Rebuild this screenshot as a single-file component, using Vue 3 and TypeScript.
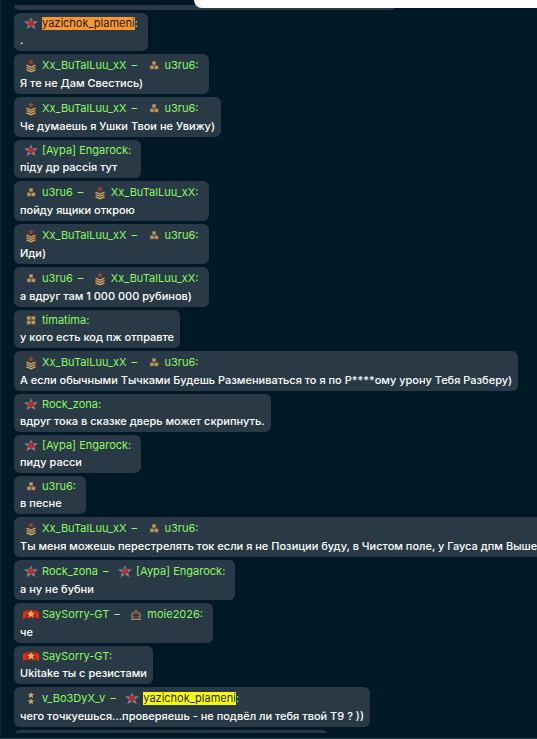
<script setup lang="ts">
type Rank = 'star' | 'chevrons' | 'three' | 'four' | 'banner' | 'crate' | 'twoStars'
type Mark = 'active' | 'found'

interface Player {
  rank: Rank
  name: string
  mark?: Mark
}

interface Message {
  from: Player
  to?: Player
  text: string
}

const yazichok: Player = { rank: 'star', name: 'yazichok_plameni' }
const brutal: Player = { rank: 'chevrons', name: 'Xx_BuTalLuu_xX' }
const u3: Player = { rank: 'three', name: 'u3ru6' }
const engarock: Player = { rank: 'star', name: '[Аура] Engarock' }
const rock: Player = { rank: 'star', name: 'Rock_zona' }
const sorry: Player = { rank: 'banner', name: 'SaySorry-GT' }

const messages: Message[] = [
  { from: { ...yazichok, mark: 'active' }, text: '.' },
  { from: brutal, to: u3, text: 'Я те не Дам Свестись)' },
  { from: brutal, to: u3, text: 'Че думаешь я Ушки Твои не Увижу)' },
  { from: engarock, text: 'піду др рассія тут' },
  { from: u3, to: brutal, text: 'пойду ящики открою' },
  { from: brutal, to: u3, text: 'Иди)' },
  { from: u3, to: brutal, text: 'а вдруг там 1 000 000 рубинов)' },
  { from: { rank: 'four', name: 'timatima' }, text: 'у кого есть код пж отправте' },
  { from: brutal, to: u3, text: 'А если обычными Тычками Будешь Размениваться то я по Р****ому урону Тебя Разберу)' },
  { from: rock, text: 'вдруг тока в сказке дверь может скрипнуть.' },
  { from: engarock, text: 'пиду расси' },
  { from: u3, text: 'в песне' },
  { from: brutal, to: u3, text: 'Ты меня можешь перестрелять ток если я не Позиции буду, в Чистом поле, у Гауса дпм Выше' },
  { from: rock, to: engarock, text: 'а ну не бубни' },
  { from: sorry, to: { rank: 'crate', name: 'moie2026' }, text: 'че' },
  { from: sorry, text: 'Ukitake ты с резистами' },
  {
    from: { rank: 'twoStars', name: 'v_Bo3DyX_v' },
    to: { ...yazichok, mark: 'found' },
    text: 'чего точкуешься...проверяешь - не подвёл ли тебя твой Т9 ? ))',
  },
]

const players = (m: Message): Player[] => (m.to ? [m.from, m.to] : [m.from])
</script>

<template>
  <main class="screen">
    <svg class="defs" aria-hidden="true">
      <symbol id="star" viewBox="0 0 22 16">
        <path d="M11 2.4l1.7 3.8 5.3.2-4.1 3 1.6 4.5-4.5-2.4-4.500 2.400 1.600-4.500-4.100-3 5.300-.2z" fill="#8f969b" stroke="#4d5862" stroke-width=".5" />
        <path d="M8.300 7.200L11 5.800l2.700 1.400-.5 3-2.200 1-2.200-1z" fill="#d3222c" stroke="#8e1f26" stroke-width=".7" />
      </symbol>
      <symbol id="chevrons" viewBox="0 0 22 16">
        <path d="M6.5 7.5L11 9.300l4.500-1.800V13L11 15.500 6.500 13z" fill="#5b4428" />
        <path d="M6.5 8.200l4.500 1.900 4.500-1.900M6.500 10.500l4.500 1.900 4.500-1.900M6.500 12.800l4.500 1.900 4.500-1.900" fill="none" stroke="#c8a56d" stroke-width="1.3" />
        <path d="M11 2l.8 1.900 2.200.2-1.700 1.500.6 2.200-1.900-1.200-1.900 1.200.6-2.200L8 4.100l2.200-.2z" fill="#a9402b" />
      </symbol>
      <symbol id="three" viewBox="0 0 22 16">
        <g fill="#c49a5e" stroke="#8a6a3e" stroke-width=".5">
          <rect x="9.3" y="4.3" width="3.5" height="3.4" />
          <rect x="7.2" y="8.8" width="3.5" height="3.2" />
          <rect x="11.6" y="8.8" width="3.5" height="3.2" />
        </g>
      </symbol>
      <symbol id="four" viewBox="0 0 22 16">
        <g fill="#c49a5e" stroke="#8a6a3e" stroke-width=".5">
          <rect x="7" y="4.3" width="3.5" height="3.3" />
          <rect x="11.6" y="4.3" width="3.5" height="3.3" />
          <rect x="7" y="8.8" width="3.5" height="3.3" />
          <rect x="11.6" y="8.8" width="3.5" height="3.3" />
        </g>
      </symbol>
      <symbol id="banner" viewBox="0 0 22 16">
        <path d="M3 6l4-2h8l4 2v7l-4-1.500H7L3 13z" fill="#b82314" />
        <path d="M3 6.500l3-1.500v6.500l-3 1.200zM19 6.500l-3-1.500v6.500l3 1.200z" fill="#e62a14" />
        <path d="M7 10.500l4-3 4 3v2H7z" fill="#83351c" />
        <path d="M11 4l1.200 2.500 2.900.2-2.200 1.900.8 2.900-2.700-1.600-2.700 1.600.8-2.900-2.200-1.900 2.900-.2z" fill="#e9ae5c" />
      </symbol>
      <symbol id="crate" viewBox="0 0 22 16">
        <path d="M8.500 6.500L7 8v4.500M13.500 6.500L15 8v4.500M6 13.400h10" fill="none" stroke="#ad8859" stroke-width="1.2" />
        <path d="M11 3l.8 1.900 2.100.2-1.600 1.400.5 2.100-1.800-1.100-1.800 1.100.5-2.100-1.600-1.400 2.100-.2z" fill="#a85a3c" />
        <path d="M8.200 10.700h2M11.800 10.700h2" stroke="#a74834" stroke-width="1.6" />
      </symbol>
      <symbol id="twoStars" viewBox="0 0 22 16">
        <path d="M11 2l.9 2 2.400.2-1.800 1.400.6 2.300-2.100-1.200-2.100 1.200.6-2.300-1.800-1.400 2.400-.2zM11 8.200l.9 2 2.400.2-1.800 1.400.6 2.300-2.100-1.200-2.100 1.200.6-2.300-1.800-1.400 2.400-.2z" fill="#d0a66c" />
      </symbol>
    </svg>

    <section class="log">
      <div class="bubble earlier"></div>
      <article v-for="(m, i) in messages" :key="i" class="bubble">
        <header class="head" :class="{ direct: m.to }">
          <template v-for="(p, n) in players(m)" :key="n">
            <span v-if="n > 0" class="dash">–</span>
            <svg class="rank" aria-hidden="true"><use :href="'#' + p.rank" /></svg>
            <span><span :class="p.mark">{{ p.name }}</span><template v-if="n === players(m).length - 1">:</template></span>
          </template>
        </header>
        <p class="text">{{ m.text }}</p>
      </article>
      <div class="bubble later"></div>
    </section>

    <div class="popup"></div>
  </main>
</template>

<style>
body {
  margin: 0;
  background: #001926;
}
</style>

<style scoped>
.screen {
  position: relative;
  box-sizing: border-box;
  height: 100vh;
  padding: 5px 0;
  display: flex;
  overflow: hidden;
  border-left: 1px solid #0b2733;
  border-bottom: 1px solid #2a3b47;
  background: #001926;
  font-family: Inter, Roboto, "Liberation Sans", sans-serif;
  font-size: 11px;
}
.defs {
  position: absolute;
  width: 0;
  height: 0;
}
.log {
  flex: 1;
  min-width: 0;
  padding-left: 13px;
  display: flex;
  flex-direction: column;
  align-items: flex-start;
  gap: 3px;
  overflow: hidden;
}
.bubble {
  flex: none;
  box-sizing: border-box;
  padding: 0 6px 4px;
  border-radius: 6px;
  background: #293a46;
  white-space: nowrap;
}
.earlier {
  width: 73%;
  height: 5px;
  border-radius: 0 0 6px 6px;
}
.later {
  width: 60%;
  height: 38px;
}
.head {
  display: flex;
  align-items: center;
  height: 20px;
  padding-right: 4px;
  color: #8af960;
}
.head.direct {
  height: 22px;
}
.rank {
  flex: none;
  width: 22px;
  height: 16px;
}
.dash {
  width: 12px;
  box-sizing: border-box;
  flex: none;
  padding-left: 5px;
  margin-right: 4px;
  font-weight: 500;
}
.active,
.found {
  display: inline-block;
  line-height: 13px;
  color: #14240f;
}
.active {
  background: #ff9632;
}
.found {
  background: #ffff00;
}
.text {
  margin: 0;
  line-height: 14px;
  font-weight: 450;
  color: #ffffff;
}
.popup {
  position: absolute;
  top: 0;
  right: 0;
  width: 64%;
  height: 8px;
  border-radius: 0 0 0 8px;
  background: #ffffff;
}
</style>
